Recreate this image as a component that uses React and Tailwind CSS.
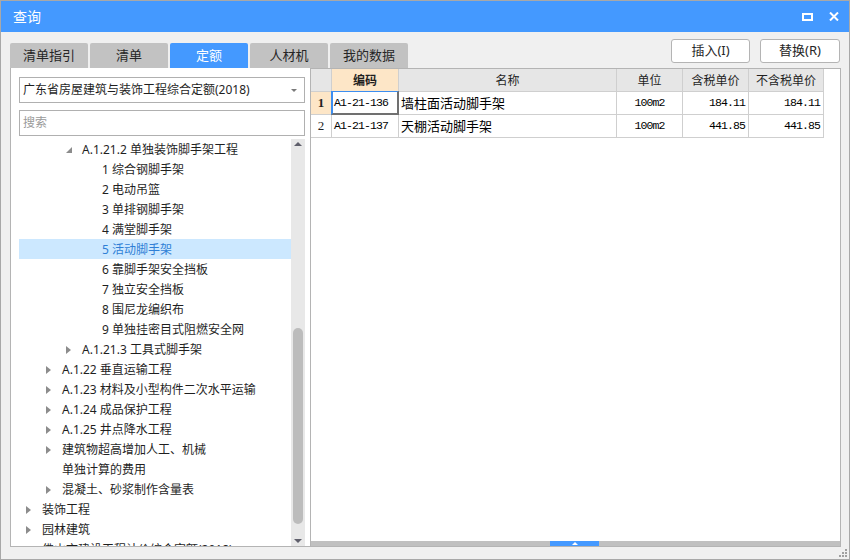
import React from "react";

const tree = [
  { level: 2, text: "A.1.21.2 单独装饰脚手架工程", arrow: "open" },
  { level: 3, text: "1 综合钢脚手架" },
  { level: 3, text: "2 电动吊篮" },
  { level: 3, text: "3 单排钢脚手架" },
  { level: 3, text: "4 满堂脚手架" },
  { level: 3, text: "5 活动脚手架", selected: true },
  { level: 3, text: "6 靠脚手架安全挡板" },
  { level: 3, text: "7 独立安全挡板" },
  { level: 3, text: "8 围尼龙编织布" },
  { level: 3, text: "9 单独挂密目式阻燃安全网" },
  { level: 2, text: "A.1.21.3 工具式脚手架", arrow: "closed" },
  { level: 1, text: "A.1.22 垂直运输工程", arrow: "closed" },
  { level: 1, text: "A.1.23 材料及小型构件二次水平运输", arrow: "closed" },
  { level: 1, text: "A.1.24 成品保护工程", arrow: "closed" },
  { level: 1, text: "A.1.25 井点降水工程", arrow: "closed" },
  { level: 1, text: "建筑物超高增加人工、机械", arrow: "closed" },
  { level: 1, text: "单独计算的费用" },
  { level: 1, text: "混凝土、砂浆制作含量表", arrow: "closed" },
  { level: 0, text: "装饰工程", arrow: "closed" },
  { level: 0, text: "园林建筑", arrow: "closed" },
  { level: 0, text: "佛山市建设工程计价综合定额(2018)", arrow: "closed" },
];

const indent = ["w-[7px]", "w-[27px]", "w-[47px]", "w-[67px]"];

const tabs = ["清单指引", "清单", "定额", "人材机", "我的数据"];

const rows = [
  { no: "1", code: "A1-21-136", name: "墙柱面活动脚手架", unit: "100m2", tax: "184.11", notax: "184.11", active: true },
  { no: "2", code: "A1-21-137", name: "天棚活动脚手架", unit: "100m2", tax: "441.85", notax: "441.85" },
];

const mono = "font-['Liberation_Mono',monospace] text-[11.5px] tracking-[-0.9px] text-black";

const Arrow = ({ type }) => {
  if (type === "open")
    return (
      <svg width="6" height="6" viewBox="0 0 6 6">
        <polygon points="6,0 6,6 0,6" fill="#8c8c8c" />
      </svg>
    );
  if (type === "closed")
    return (
      <svg width="5" height="8" viewBox="0 0 5 8">
        <polygon points="0,0 5,4 0,8" fill="#8c8c8c" />
      </svg>
    );
  return null;
};

const App = () => {
  return (
    <div className="w-[850px] h-[560px] border border-[#a8a8a8] bg-[#f0f0f0] flex flex-col font-['Noto_Sans','Noto_Sans_CJK_SC',sans-serif] text-[12px] text-[#1f1f1f] overflow-hidden">
      {/* title bar */}
      <div className="h-[31px] bg-[#4499ff] flex items-center justify-between pl-[12px] pr-[10px] shrink-0">
        <span className="text-white text-[14px]">查询</span>
        <div className="flex items-center gap-[16px]">
          <svg width="11" height="8" viewBox="0 0 11 8">
            <rect x="1" y="1" width="9" height="6" fill="none" stroke="#fff" strokeWidth="2" />
          </svg>
          <svg width="10" height="9" viewBox="0 0 10 9">
            <path d="M1 0.5 L9 8.5 M9 0.5 L1 8.5" stroke="#fff" strokeWidth="2" />
          </svg>
        </div>
      </div>

      {/* tabs + buttons */}
      <div className="h-[36px] flex justify-between px-[9px] shrink-0">
        <div className="flex items-end gap-[2px]">
          {tabs.map((t) => (
            <div
              key={t}
              className={`w-[78px] h-[25px] rounded-t-[2px] flex items-center justify-center text-[13px] ${
                t === "定额" ? "bg-[#4499ff] text-white" : "bg-[#c2c2c2] text-[#262626]"
              }`}
            >
              {t}
            </div>
          ))}
        </div>
        <div className="flex items-start gap-[10px] pt-[7px]">
          <button className="w-[79px] h-[24px] bg-white border border-[#b4b4b4] rounded-[3px] text-[13px] text-[#262626]">
            插入(I)
          </button>
          <button className="w-[80px] h-[24px] bg-white border border-[#b4b4b4] rounded-[3px] text-[13px] text-[#262626]">
            替换(R)
          </button>
        </div>
      </div>

      {/* main */}
      <div className="h-[479px] flex pl-[9px] pr-[8px] shrink-0">
        {/* left panel */}
        <div className="w-[300px] bg-white border-l border-b border-[#b4b4b4] flex flex-col pl-[8px] pr-[5px]">
          <div className="mt-[9px] h-[26px] border border-[#b0b0b0] flex items-center justify-between pl-[3px] pr-[7px]">
            <span>广东省房屋建筑与装饰工程综合定额(2018)</span>
            <svg width="6" height="3" viewBox="0 0 6 3">
              <polygon points="0,0 6,0 3,3" fill="#7a7a7a" />
            </svg>
          </div>
          <div className="mt-[7px] h-[26px] border border-[#b0b0b0] flex items-center pl-[3px] text-[#9a9a9a]">
            搜索
          </div>
          <div className="mt-[3px] flex-1 flex overflow-hidden">
            <div className="flex-1 overflow-hidden">
              {tree.map((n, i) => (
                <div
                  key={i}
                  className={`h-[20px] flex items-center whitespace-nowrap pt-[1px] ${
                    n.selected ? "bg-[#cce8ff] text-[#2f7fd6]" : ""
                  }`}
                >
                  <div className={`${indent[n.level]} shrink-0`} />
                  <div className="w-[16px] shrink-0 flex items-center">
                    <Arrow type={n.arrow} />
                  </div>
                  <span>{n.text}</span>
                </div>
              ))}
            </div>
            <div className="w-[14px] bg-[#e8e8e8] flex flex-col items-center shrink-0">
              <svg className="mt-[3px]" width="8" height="4" viewBox="0 0 8 4">
                <polygon points="0,4 8,4 4,0" fill="#5f5f6b" />
              </svg>
              <div className="flex-1" />
              <div className="w-[10px] h-[196px] rounded-full bg-[#bcbcbc]" />
              <div className="h-[15px]" />
              <svg className="mb-[3px]" width="8" height="4" viewBox="0 0 8 4">
                <polygon points="0,0 8,0 4,4" fill="#5f5f6b" />
              </svg>
            </div>
          </div>
        </div>

        {/* table panel */}
        <div className="w-[531px] bg-white border border-[#b4b4b4] flex flex-col">
          <div className="grid grid-cols-[21px_67px_218px_66px_66px_75px] w-[513px] text-[12px] font-['Noto_Sans_CJK_SC',sans-serif]">
            <div className="h-[23px] bg-[#e6e6e6] border-r border-b border-[#cfcfcf]" />
            <div className="h-[23px] bg-[#fde6c7] border-r border-b border-[#cfcfcf] flex items-center justify-center font-bold">
              编码
            </div>
            {["名称", "单位", "含税单价", "不含税单价"].map((h) => (
              <div
                key={h}
                className="h-[23px] bg-[#e6e6e6] border-r border-b border-[#cfcfcf] flex items-center justify-center"
              >
                {h}
              </div>
            ))}
            {rows.map((r) => (
              <React.Fragment key={r.no}>
                <div
                  className={`h-[23px] border-r border-b border-[#cfcfcf] flex items-center justify-center font-['Liberation_Serif',serif] text-[13px] ${
                    r.active ? "bg-[#fde6c7] font-bold" : ""
                  }`}
                >
                  {r.no}
                </div>
                <div className={`relative h-[23px] border-r border-b border-[#cfcfcf] flex items-center pl-[2px] ${mono}`}>
                  {r.code}
                  {r.active && (
                    <div className="absolute inset-[-1px] border-l-2 border-t border-r-2 border-b-2 border-l-[#3d8ef0] border-t-[#3d8ef0] border-r-[#707070] border-b-[#707070]" />
                  )}
                </div>
                <div className="h-[23px] border-r border-b border-[#cfcfcf] flex items-center pl-[2px] text-[13px] text-black">
                  {r.name}
                </div>
                <div className={`h-[23px] border-r border-b border-[#cfcfcf] flex items-center justify-center ${mono}`}>
                  {r.unit}
                </div>
                <div className={`h-[23px] border-r border-b border-[#cfcfcf] flex items-center justify-end pr-[3px] ${mono}`}>
                  {r.tax}
                </div>
                <div className={`h-[23px] border-r border-b border-[#cfcfcf] flex items-center justify-end pr-[3px] ${mono}`}>
                  {r.notax}
                </div>
              </React.Fragment>
            ))}
          </div>
          <div className="flex-1" />
          <div className="h-[5px] bg-[#c0c0c0] flex">
            <div className="w-[239px]" />
            <div className="w-[49px] bg-[#4499ff] flex items-center justify-center">
              <svg width="6" height="3" viewBox="0 0 6 3">
                <polygon points="0,3 6,3 3,0" fill="#fff" />
              </svg>
            </div>
          </div>
        </div>
      </div>

      {/* bottom strip with grip */}
      <div className="flex-1 flex justify-end items-end pr-[2px] pb-[2px]">
        <div className="grid grid-cols-3 gap-[1px]">
          <div className="w-[2px] h-[2px]" />
          <div className="w-[2px] h-[2px]" />
          <div className="w-[2px] h-[2px] bg-[#a0a0a0]" />
          <div className="w-[2px] h-[2px]" />
          <div className="w-[2px] h-[2px] bg-[#a0a0a0]" />
          <div className="w-[2px] h-[2px] bg-[#a0a0a0]" />
          <div className="w-[2px] h-[2px] bg-[#a0a0a0]" />
          <div className="w-[2px] h-[2px] bg-[#a0a0a0]" />
          <div className="w-[2px] h-[2px] bg-[#a0a0a0]" />
        </div>
      </div>
    </div>
  );
};

export default App;
